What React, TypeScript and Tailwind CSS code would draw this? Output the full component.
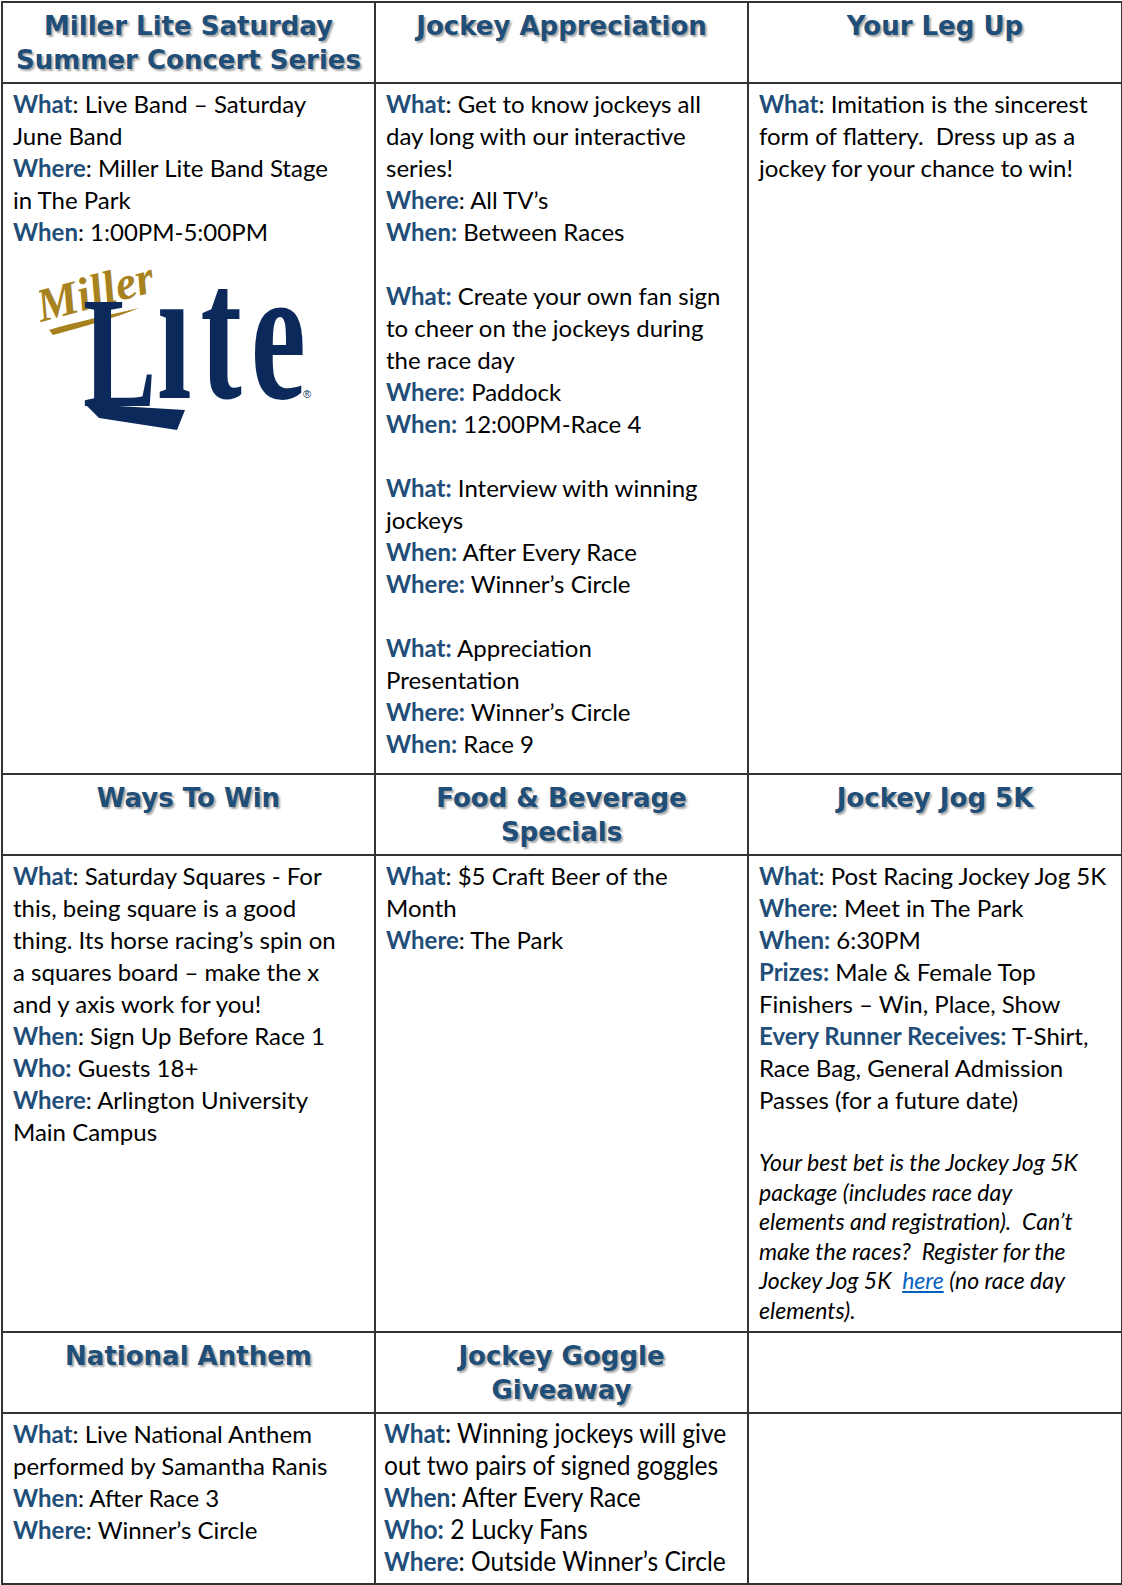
import React from "react"

const head = "align-top border-2 border-[#333] text-center pt-[6px] px-2 font-['DejaVu_Sans',sans-serif] font-bold text-[26px] leading-[34px] text-[#1f4e79] [text-shadow:2px_2px_2px_rgba(0,0,0,0.35)]"
const cell = "align-top border-2 border-[#333] pt-[4px] pl-[10px] pr-1 font-['Lato',sans-serif] text-[24px] leading-[32px] text-black whitespace-nowrap"

function L({ children }: { children: React.ReactNode }) {
  return <span className="font-bold text-[#1f4e79]">{children}</span>
}

function MillerLite() {
  return (
    <svg width="280" height="176" viewBox="0 0 280 176" className="ml-[26px] mt-[10px]">
      {/* gold script + swash */}
      <path d="M10 72 C36 64 66 58 100 50 C76 60 46 68 14 77 Z" fill="#a7821e" />
      <text
        x="2"
        y="64"
        fontSize="47"
        fontStyle="italic"
        fontWeight="bold"
        fontFamily="'Liberation Serif', serif"
        fill="#a7821e"
        transform="rotate(-15 2 64)"
      >
        Miller
      </text>
      {/* navy Lite */}
      <text
        x="44"
        y="148"
        fontSize="110"
        fontWeight="bold"
        fontFamily="'Liberation Serif', serif"
        fill="#0b2a5b"
        transform="translate(0 148) scale(1 1.45) translate(0 -148)"
      >
        L
      </text>
      <path d="M46 146 L146 152 L138 172 L60 160 Z" fill="#0b2a5b" />
      <text
        x="118"
        y="140"
        fontSize="124"
        fontWeight="bold"
        letterSpacing="9"
        fontFamily="'Liberation Serif', serif"
        fill="#0b2a5b"
        transform="translate(0 140) scale(1 1.55) translate(0 -140)"
      >
        ıte
      </text>
      <text x="264" y="140" fontSize="11" fontFamily="'Liberation Sans', sans-serif" fill="#0b2a5b">
        ®
      </text>
    </svg>
  )
}

export default function App() {
  return (
    <div className="w-[1122px] h-[1585px] bg-white pl-[1px] pt-[1px]">
      <table className="table-fixed border-collapse w-[1120px]">
        <colgroup>
          <col className="w-[373px]" />
          <col className="w-[373px]" />
          <col className="w-[374px]" />
        </colgroup>
        <tbody>
          <tr className="h-[81px]">
            <td className={head}>
              Miller Lite Saturday
              <br />
              Summer Concert Series
            </td>
            <td className={head}>Jockey Appreciation</td>
            <td className={head}>Your Leg Up</td>
          </tr>
          <tr className="h-[691px]">
            <td className={cell}>
              <L>What</L>: Live Band – Saturday
              <br />
              June Band
              <br />
              <L>Where</L>: Miller Lite Band Stage
              <br />
              in The Park
              <br />
              <L>When</L>: 1:00PM-5:00PM
              <MillerLite />
            </td>
            <td className={cell}>
              <L>What</L>: Get to know jockeys all
              <br />
              day long with our interactive
              <br />
              series!
              <br />
              <L>Where</L>: All TV’s
              <br />
              <L>When:</L> Between Races
              <br />
              <br />
              <L>What:</L> Create your own fan sign
              <br />
              to cheer on the jockeys during
              <br />
              the race day
              <br />
              <L>Where:</L> Paddock
              <br />
              <L>When:</L> 12:00PM-Race 4
              <br />
              <br />
              <L>What:</L> Interview with winning
              <br />
              jockeys
              <br />
              <L>When:</L> After Every Race
              <br />
              <L>Where:</L> Winner’s Circle
              <br />
              <br />
              <L>What:</L> Appreciation
              <br />
              Presentation
              <br />
              <L>Where:</L> Winner’s Circle
              <br />
              <L>When:</L> Race 9
            </td>
            <td className={cell}>
              <L>What</L>: Imitation is the sincerest
              <br />
              form of flattery.&nbsp; Dress up as a
              <br />
              jockey for your chance to win!
            </td>
          </tr>
          <tr className="h-[81px]">
            <td className={head}>Ways To Win</td>
            <td className={head}>
              Food &amp; Beverage
              <br />
              Specials
            </td>
            <td className={head}>Jockey Jog 5K</td>
          </tr>
          <tr className="h-[477px]">
            <td className={cell}>
              <L>What</L>: Saturday Squares - For
              <br />
              this, being square is a good
              <br />
              thing. Its horse racing’s spin on
              <br />
              a squares board – make the x
              <br />
              and y axis work for you!
              <br />
              <L>When</L>: Sign Up Before Race 1
              <br />
              <L>Who:</L> Guests 18+
              <br />
              <L>Where</L>: Arlington University
              <br />
              Main Campus
            </td>
            <td className={cell}>
              <L>What</L>: $5 Craft Beer of the
              <br />
              Month
              <br />
              <L>Where</L>: The Park
            </td>
            <td className={cell}>
              <L>What</L>: Post Racing Jockey Jog 5K
              <br />
              <L>Where</L>: Meet in The Park
              <br />
              <L>When:</L> 6:30PM
              <br />
              <L>Prizes:</L> Male &amp; Female Top
              <br />
              Finishers – Win, Place, Show
              <br />
              <L>Every Runner Receives:</L> T-Shirt,
              <br />
              Race Bag, General Admission
              <br />
              Passes (for a future date)
              <p className="mt-[32px] italic text-[23px] leading-[29.5px]">
                Your best bet is the Jockey Jog 5K
                <br />
                package (includes race day
                <br />
                elements and registration).&nbsp; Can’t
                <br />
                make the races?&nbsp; Register for the
                <br />
                Jockey Jog 5K&nbsp; <a className="text-[#0563c1] underline">here</a> (no race day
                <br />
                elements).
              </p>
            </td>
          </tr>
          <tr className="h-[81px]">
            <td className={head}>National Anthem</td>
            <td className={head}>
              Jockey Goggle
              <br />
              Giveaway
            </td>
            <td className={head}></td>
          </tr>
          <tr className="h-[171px]">
            <td className={cell}>
              <L>What</L>: Live National Anthem
              <br />
              performed by Samantha Ranis
              <br />
              <L>When</L>: After Race 3
              <br />
              <L>Where</L>: Winner’s Circle
            </td>
            <td className={`${cell} !pt-[3px] !pl-[8px]`}>
              {/* slightly condensed block, as in the source document */}
              <div className="origin-top-left scale-x-[0.91] w-[390px] text-[27px]">
                <L>What</L>: Winning jockeys will give
                <br />
                out two pairs of signed goggles
                <br />
                <L>When</L>: After Every Race
                <br />
                <L>Who:</L> 2 Lucky Fans
                <br />
                <L>Where</L>: Outside Winner’s Circle
              </div>
            </td>
            <td className={cell}></td>
          </tr>
        </tbody>
      </table>
    </div>
  )
}
